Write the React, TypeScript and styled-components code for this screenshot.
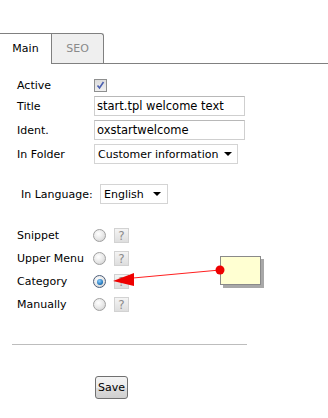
import styled, { createGlobalStyle, css } from 'styled-components'

const GlobalStyle = createGlobalStyle`
  html, body {
    margin: 0;
    padding: 0;
    background: #fff;
  }
  body {
    font-family: "DejaVu Sans", Verdana, sans-serif;
    font-size: 11px;
    color: #000;
  }
`

const Page = styled.div`
  position: relative;
  width: 328px;
  height: 418px;
  padding-top: 33px;
  box-sizing: border-box;
  overflow: hidden;
`

const TabBar = styled.div`
  display: flex;
  align-items: flex-end;
  height: 30px;
  border-bottom: 1px solid #808080;
`

const Tab = styled.div<{ $active?: boolean }>`
  display: flex;
  align-items: center;
  justify-content: center;
  box-sizing: border-box;
  height: 30px;
  width: 52px;
  font-size: 11px;
  border-top: 1px solid #808080;
  border-right: 1px solid #808080;
  ${({ $active }) =>
    $active
      ? css`
          background: #fff;
          color: #000;
          margin-bottom: -1px;
          height: 31px;
          padding-bottom: 1px;
        `
      : css`
          background: #efefef;
          color: #8a8a8a;
          border-top-right-radius: 3px;
        `}
`

const Form = styled.div`
  padding: 14px 0 0 17px;
  display: flex;
  flex-direction: column;
  gap: 4px;
`

const Row = styled.div<{ $h?: number }>`
  display: flex;
  align-items: center;
  height: ${({ $h }) => $h ?? 20}px;
`

const Label = styled.span<{ $w?: number }>`
  width: ${({ $w }) => $w ?? 77}px;
  flex: none;
  white-space: nowrap;
`

const CheckBox = styled.span`
  width: 11px;
  height: 11px;
  border: 1px solid #8e8f8f;
  background: linear-gradient(#dcdcdc, #f0f0f0);
  display: flex;
  align-items: center;
  justify-content: center;
`

const TextInput = styled.div<{ $w: number }>`
  width: ${({ $w }) => $w}px;
  height: 20px;
  box-sizing: border-box;
  border: 1px solid #cfcfcf;
  border-top-color: #b8b8b8;
  padding-left: 2px;
  display: flex;
  align-items: center;
  font-size: 11.5px;
  white-space: nowrap;
`

const Select = styled.div<{ $w: number }>`
  width: ${({ $w }) => $w}px;
  height: 20px;
  box-sizing: border-box;
  border: 1px solid #d4d4d4;
  padding: 0 6px 0 3px;
  display: flex;
  align-items: center;
  justify-content: space-between;
  font-size: 11px;
  white-space: nowrap;
  &:after {
    content: '';
    flex: none;
    margin-left: 6px;
    border-left: 4px solid transparent;
    border-right: 4px solid transparent;
    border-top: 4px solid #000;
  }
`

const LangBlock = styled.div`
  padding-left: 4px;
  margin-top: 16px;
`

const Options = styled.div`
  margin-top: 16px;
  display: flex;
  flex-direction: column;
`

const Radio = styled.span<{ $checked?: boolean }>`
  width: 11px;
  height: 11px;
  border-radius: 50%;
  border: 1px solid #a0a0a0;
  background: radial-gradient(circle at 40% 35%, #fff 0%, #e6e6e6 55%, #c8c8c8 100%);
  display: flex;
  align-items: center;
  justify-content: center;
  ${({ $checked }) =>
    $checked &&
    css`
      border-color: #4c5e7a;
      &:after {
        content: '';
        width: 6px;
        height: 6px;
        border-radius: 50%;
        background: radial-gradient(circle at 40% 35%, #8fd0ff, #1a6fb5 70%, #0d3f6e);
      }
    `}
`

const Help = styled.span`
  margin-left: 8px;
  width: 15px;
  height: 15px;
  box-sizing: border-box;
  border: 1px solid #d2d2d2;
  background: linear-gradient(#f4f4f4, #dedede);
  color: #8c8c8c;
  font-size: 12px;
  display: flex;
  align-items: center;
  justify-content: center;
`

const Divider = styled.hr`
  margin: 28px 0 0 12px;
  width: 235px;
  border: 0;
  border-top: 1px solid #bdbdbd;
`

const SaveButton = styled.button`
  margin: 31px 0 0 95px;
  width: 33px;
  height: 23px;
  padding: 0;
  font-family: "DejaVu Sans", Verdana, sans-serif;
  font-size: 11px;
  color: #000;
  border: 1px solid #707070;
  border-radius: 3px;
  background: linear-gradient(#f3f3f3 0%, #ebebeb 50%, #dddddd 51%, #cfcfcf 100%);
`

const Note = styled.div`
  position: absolute;
  left: 220px;
  top: 256px;
  width: 41px;
  height: 29px;
  box-sizing: border-box;
  border: 1px solid #8a8a8a;
  background: #ffffd2;
  box-shadow: 3px 3px 0 #a8a8a8;
`

const Overlay = styled.svg`
  position: absolute;
  left: 0;
  top: 0;
  pointer-events: none;
`

const options = [
  { label: 'Snippet', checked: false },
  { label: 'Upper Menu', checked: false },
  { label: 'Category', checked: true },
  { label: 'Manually', checked: false },
]

export default function App() {
  return (
    <Page>
      <GlobalStyle />
      <TabBar>
        <Tab $active>Main</Tab>
        <Tab>SEO</Tab>
      </TabBar>
      <Form>
        <Row $h={14}>
          <Label>Active</Label>
          <CheckBox>
            <svg width="9" height="9" viewBox="0 0 9 9">
              <path d="M1.5 4.5 L3.5 7 L7.5 1" fill="none" stroke="#4a5fb0" strokeWidth="1.6" />
            </svg>
          </CheckBox>
        </Row>
        <Row>
          <Label>Title</Label>
          <TextInput $w={151}>start.tpl welcome text</TextInput>
        </Row>
        <Row>
          <Label>Ident.</Label>
          <TextInput $w={151}>oxstartwelcome</TextInput>
        </Row>
        <Row>
          <Label>In Folder</Label>
          <Select $w={144}>Customer information</Select>
        </Row>
        <LangBlock>
          <Row>
            <Label $w={79}>In Language:</Label>
            <Select $w={68}>English</Select>
          </Row>
        </LangBlock>
        <Options>
          {options.map(o => (
            <Row key={o.label} $h={23}>
              <Label $w={76}>{o.label}</Label>
              <Radio $checked={o.checked} />
              <Help>?</Help>
            </Row>
          ))}
        </Options>
      </Form>
      <Divider />
      <SaveButton>Save</SaveButton>
      <Note />
      <Overlay width="328" height="418">
        <line x1="133" y1="278" x2="220" y2="270" stroke="#ff2020" strokeWidth="1" />
        <polygon points="113,281 134,273 134,286" fill="#ee0000" />
        <circle cx="220" cy="270" r="4.5" fill="#ee0000" />
      </Overlay>
    </Page>
  )
}
